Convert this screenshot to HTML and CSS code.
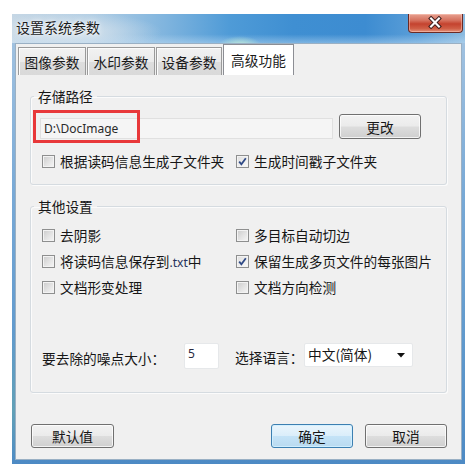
FILE: index.html
```html
<!DOCTYPE html>
<html lang="zh-CN">
<head>
<meta charset="utf-8">
<title>设置系统参数</title>
<link rel="stylesheet" href="styles.css">
</head>
<body>
<div class="window">
  <div class="titlebar">
    <span class="title">设置系统参数</span>
    <div class="close">
      <svg width="55" height="19" viewBox="0 0 55 19">
        <path d="M23.5 5.5 L31.5 13.5 M31.5 5.5 L23.5 13.5" stroke="#3a1c1c" stroke-width="4.2" stroke-linecap="square"/>
        <path d="M23.5 5.5 L31.5 13.5 M31.5 5.5 L23.5 13.5" stroke="#ffffff" stroke-width="2.2" stroke-linecap="square"/>
      </svg>
    </div>
  </div>
  <div class="client">
    <div class="tabs">
      <div class="tab tab-1">图像参数</div>
      <div class="tab tab-2">水印参数</div>
      <div class="tab tab-3">设备参数</div>
      <div class="tab tab-4 active">高级功能</div>
    </div>

    <fieldset class="group group-path">
      <legend>存储路径</legend>
      <div class="path-row">
        <div class="path-input">D:\DocImage</div>
        <button class="btn btn-change">更改</button>
        <div class="highlight"></div>
      </div>
      <div class="checks checks-path">
        <div class="check"><span class="cb"></span><span>根据读码信息生成子文件夹</span></div>
        <div class="check"><span class="cb checked"><svg width="11" height="11" viewBox="0 0 11 11"><path d="M2.2 5.6 L4.4 8.3 L8.8 2.2" fill="none" stroke="#2f4a86" stroke-width="1.8"/></svg></span><span>生成时间戳子文件夹</span></div>
      </div>
    </fieldset>

    <fieldset class="group group-other">
      <legend>其他设置</legend>
      <div class="checks checks-other">
        <div class="check"><span class="cb"></span><span>去阴影</span></div>
        <div class="check"><span class="cb"></span><span>多目标自动切边</span></div>
        <div class="check"><span class="cb"></span><span>将读码信息保存到<span class="latin">.txt</span>中</span></div>
        <div class="check"><span class="cb checked"><svg width="11" height="11" viewBox="0 0 11 11"><path d="M2.2 5.6 L4.4 8.3 L8.8 2.2" fill="none" stroke="#2f4a86" stroke-width="1.8"/></svg></span><span>保留生成多页文件的每张图片</span></div>
        <div class="check"><span class="cb"></span><span>文档形变处理</span></div>
        <div class="check"><span class="cb"></span><span>文档方向检测</span></div>
      </div>
      <div class="option-row">
        <span class="lbl lbl-noise">要去除的噪点大小：</span>
        <div class="num-input">5</div>
        <span class="lbl lbl-lang">选择语言：</span>
        <div class="select">
          <span>中文(简体)</span>
          <svg class="arrow" width="8" height="5" viewBox="0 0 8 5"><path d="M0 0 H8 L4 4.5 Z" fill="#111"/></svg>
        </div>
      </div>
    </fieldset>

    <div class="footer">
      <button class="btn btn-foot">默认值</button>
      <div class="footer-right">
        <button class="btn btn-foot btn-default">确定</button>
        <button class="btn btn-foot">取消</button>
      </div>
    </div>
  </div>
</div>
</body>
</html>
```

FILE: styles.css
```css
* { box-sizing: border-box; }

body {
  margin: 0;
  background: #ffffff;
  font-family: "Noto Sans CJK SC", "Noto Sans", sans-serif;
  font-size: 13.7px;
  color: #161616;
}

.window {
  margin: 14px 0 0 12px;
  width: 453px;
  height: 450px;
  display: flex;
  flex-direction: column;
  padding: 0 3px 4px 3px;
  background:
    linear-gradient(180deg, rgba(0,0,0,0) 0%, rgba(0,0,0,0) 70%, rgba(120,190,150,0.35) 88%, rgba(0,0,0,0) 100%) left / 3px 100% no-repeat,
    linear-gradient(180deg, #a8c6e2 0%, #78a9d6 40%, #5e98cc 75%, #4d8ac4 100%);
}

.titlebar {
  height: 29px;
  margin: 0 -3px;
  display: flex;
  justify-content: space-between;
  align-items: flex-start;
  background:
    radial-gradient(ellipse 22px 10px at 228px 32px, rgba(200,240,215,0.95), rgba(200,240,215,0) 100%),
    radial-gradient(ellipse 40px 10px at 262px 38px, rgba(70,150,90,0.55), rgba(70,150,90,0) 100%),
    radial-gradient(ellipse 90px 20px at 60px 18px, rgba(220,230,238,0.9), rgba(220,230,238,0) 100%),
    linear-gradient(180deg, rgba(255,255,255,0) 0%, rgba(255,255,255,0) 70%, rgba(200,225,245,0.45) 100%),
    linear-gradient(90deg, #c6d7e5 0%, #b0cde4 18%, #7fb4de 34%, #4f9bd7 48%, #3f8fd2 62%, #3d8cd1 78%, #5c9fd8 90%, #8cbbe0 100%);
}

.title {
  padding-left: 4px;
  line-height: 27px;
  font-size: 14px;
  color: #1c1c1c;
  text-shadow: 0 0 6px rgba(255,255,255,0.9), 0 0 3px rgba(255,255,255,0.8);
}

.close {
  width: 55px;
  height: 19px;
  margin-right: 2px;
  border: 1px solid #6b2a25;
  border-top: none;
  border-radius: 0 0 4px 4px;
  background: linear-gradient(180deg, #e7a191 0%, #d6725f 35%, #c4432f 55%, #cf5d45 80%, #e3917a 100%);
  box-shadow: inset 0 0 0 1px rgba(255,210,200,0.45);
  display: flex;
}

.close svg { display: block; margin: -1px 0 0 -1px; }

.client {
  height: 417px;
  background: #f0f0f0;
  border: 1px solid #9ab0c4;
  display: flex;
  flex-direction: column;
}

.tabs {
  height: 31px;
  padding-left: 2px;
  display: flex;
  align-items: flex-end;
  gap: 1px;
}

.tab {
  height: 28px;
  padding: 0;
  text-align: center;
  white-space: nowrap;
  line-height: 28px;
  border: 1px solid #9a9a9a;
  border-bottom: none;
  background: linear-gradient(180deg, #f2f2f2 0%, #ebebeb 50%, #dedede 51%, #d9d9d9 100%);
  box-shadow: inset 1px 1px 0 #fcfcfc;
  color: #1a1a1a;
}

.tab-1, .tab-2 { width: 68px; }
.tab-3 { width: 66px; }
.tab-4 { width: 71px; }

.tab.active {
  height: 31px;
  line-height: 30px;
  background: #ffffff;
  border-color: #8c8e94;
  box-shadow: none;
}

.group {
  margin: 11px 14px 0 14px;
  padding: 0;
  min-inline-size: 0;
  border: 1px solid #d5dbe0;
  border-radius: 3px;
  box-shadow: inset 1px 1px 0 #fbfbfb, 1px 1px 0 #fbfbfb;
}

.group legend {
  margin-left: 3px;
  padding: 0 4px;
  line-height: 20px;
}

.group-path { padding-bottom: 13px; }
.group-other { padding-bottom: 23px; }

.path-row {
  position: relative;
  margin: 8px 0 0 9px;
  height: 25px;
  display: flex;
  align-items: flex-end;
}

.path-input {
  width: 293px;
  height: 21px;
  border: 1px solid #e0e0e0;
  background: #f5f5f5;
  padding-left: 3px;
  line-height: 19px;
  font-family: "Noto Sans", sans-serif;
  font-size: 12px;
  color: #2a2a2a;
}

.highlight {
  position: absolute;
  left: -7px;
  top: -4px;
  width: 107px;
  height: 33px;
  border: 3px solid #e8383a;
}

.btn {
  font: inherit;
  color: #161616;
  padding: 0;
  border: 1px solid #707070;
  border-radius: 3px;
  background: linear-gradient(180deg, #f2f2f2 0%, #ebebeb 48%, #dddddd 52%, #cfcfcf 100%);
  box-shadow: inset 0 0 0 1px rgba(255,255,255,0.75);
  cursor: default;
}

.btn-change {
  width: 82px;
  height: 25px;
  margin-left: 6px;
  line-height: 22px;
}

.checks {
  margin-left: 11px;
  display: grid;
  grid-template-columns: 194px auto;
}

.checks-path {
  margin-top: 12px;
  grid-auto-rows: 20px;
}

.checks-other {
  margin-top: 6px;
  grid-auto-rows: 26px;
}

.check {
  display: flex;
  align-items: center;
  gap: 5px;
  white-space: nowrap;
}

.cb {
  width: 13px;
  height: 13px;
  flex: none;
  border: 1px solid #8e8f8f;
  background: linear-gradient(135deg, #cbcbcb 0%, #e4e4e4 55%, #f6f6f6 100%);
  box-shadow: inset 0 0 0 1px #f3f3f3;
  display: flex;
  align-items: center;
  justify-content: center;
}

.cb.checked {
  background: linear-gradient(135deg, #dcdcdc 0%, #eeeeee 55%, #fafafa 100%);
}

.cb svg { display: block; }

.latin {
  font-family: "Noto Sans", sans-serif;
  font-size: 12px;
  color: #24305a;
}

.option-row {
  margin: 43px 0 0 11px;
  height: 26px;
  display: flex;
  align-items: center;
}

.lbl { white-space: nowrap; }
.lbl-noise { width: 142px; padding-top: 4px; }
.lbl-lang { width: 69px; margin-left: 16px; padding-top: 1px; }

.num-input {
  width: 35px;
  height: 26px;
  background: #ffffff;
  border: 1px solid #e6e8ea;
  border-radius: 2px;
  padding: 2px 0 0 3px;
  line-height: 16px;
  font-family: "Noto Sans", sans-serif;
  font-size: 12px;
  color: #2a2a40;
  align-self: flex-start;
}

.select {
  width: 109px;
  height: 24px;
  align-self: flex-start;
  background: #ffffff;
  border: 1px solid #e6e8ea;
  border-radius: 2px;
  padding: 0 7px 0 3px;
  display: flex;
  align-items: flex-start;
  justify-content: space-between;
  line-height: 20px;
}

.select .arrow { margin-top: 9px; }

.footer {
  margin-top: 31px;
  padding: 0 14px 0 15px;
  display: flex;
  justify-content: space-between;
}

.footer-right {
  display: flex;
  gap: 12px;
}

.btn-foot {
  height: 24px;
  line-height: 21px;
}

.footer > .btn-foot { width: 83px; }
.footer-right .btn-foot { width: 82px; }

.btn-default {
  border-color: #3c7fb1;
  background: linear-gradient(180deg, #eaf5fc 0%, #dbeefa 48%, #c4e3f7 52%, #b9daf0 100%);
  box-shadow: inset 0 0 0 1px rgba(210,240,255,0.9);
}
```
